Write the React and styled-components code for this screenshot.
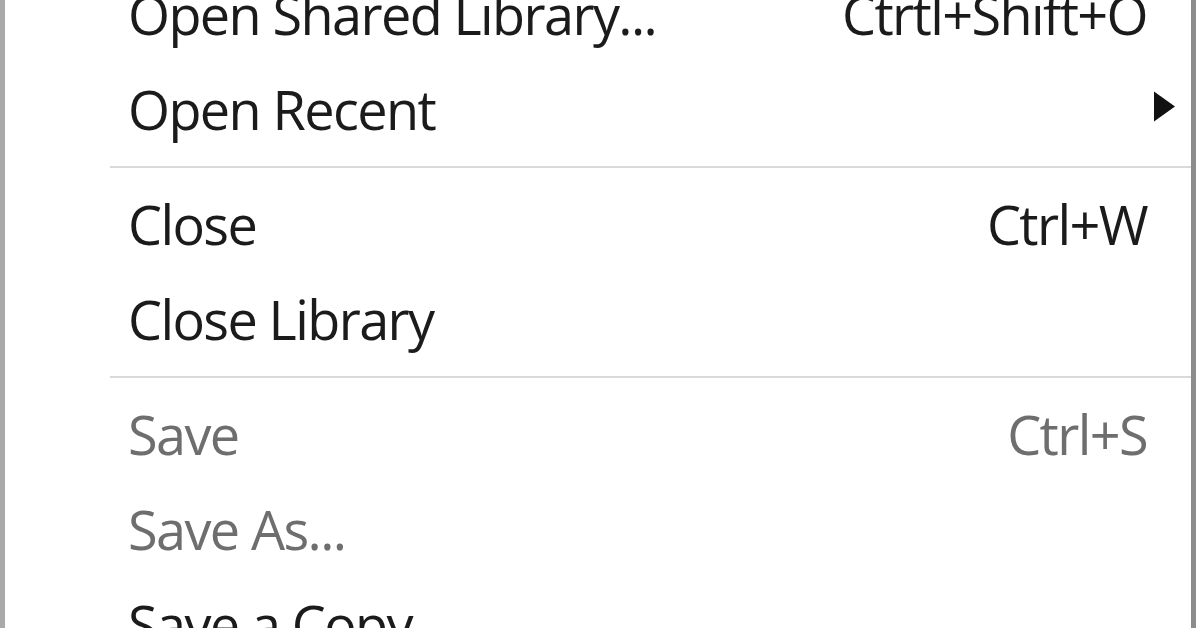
import styled, { createGlobalStyle } from "styled-components";

const GlobalStyle = createGlobalStyle`
  html, body {
    margin: 0;
    padding: 0;
    background: #ffffff;
    overflow: hidden;
  }
`;

const items = [
  { label: "Open Shared Library...", shortcut: "Ctrtl+Shift+O" },
  { label: "Open Recent", submenu: true },
  { separator: true },
  { label: "Close", shortcut: "Ctrl+W" },
  { label: "Close Library" },
  { separator: true },
  { label: "Save", shortcut: "Ctrl+S", disabled: true },
  { label: "Save As...", disabled: true },
  { label: "Save a Copy" },
];

const App = () => {
  return (
    <>
      <GlobalStyle />
      <Page>
        <Menu>
          {items.map((item, i) =>
            item.separator ? (
              <Separator key={i} />
            ) : (
              <Item key={i} $disabled={item.disabled}>
                <Label>{item.label}</Label>
                {item.shortcut && <Shortcut>{item.shortcut}</Shortcut>}
                {item.submenu && (
                  <Arrow viewBox="0 0 23 32">
                    <path d="M1 1 L22 16 L1 31 Z" fill="#111" />
                  </Arrow>
                )}
              </Item>
            )
          )}
        </Menu>
      </Page>
    </>
  );
};

const Page = styled.div`
  width: 1196px;
  height: 628px;
  overflow: hidden;
  background: #ffffff;
`;

const Menu = styled.div`
  display: flex;
  flex-direction: column;
  margin-top: -33px;
  width: 1196px;
  box-sizing: border-box;
  border-left: 5px solid #a9a9a9;
  border-right: 5px solid #8c8c8c;
  background: #ffffff;
`;

const Item = styled.div`
  display: flex;
  align-items: center;
  position: relative;
  height: 95px;
  padding-left: 123px;
  padding-right: 44px;
  font-family: "Open Sans", "Liberation Sans", sans-serif;
  font-size: 54px;
  letter-spacing: -1.6px;
  line-height: 95px;
  color: ${(p) => (p.$disabled ? "#6e6e6e" : "#1b1b1b")};
`;

const Label = styled.span`
  flex: 1;
  white-space: nowrap;
`;

const Shortcut = styled.span`
  white-space: nowrap;
`;

const Arrow = styled.svg`
  position: absolute;
  right: 15px;
  top: 28px;
  width: 23px;
  height: 33px;
`;

const Separator = styled.div`
  height: 20px;
  display: flex;
  align-items: center;
  padding-left: 105px;

  &::after {
    content: "";
    flex: 1;
    height: 2px;
    background: #d9d9d9;
  }
`;

export default App;
